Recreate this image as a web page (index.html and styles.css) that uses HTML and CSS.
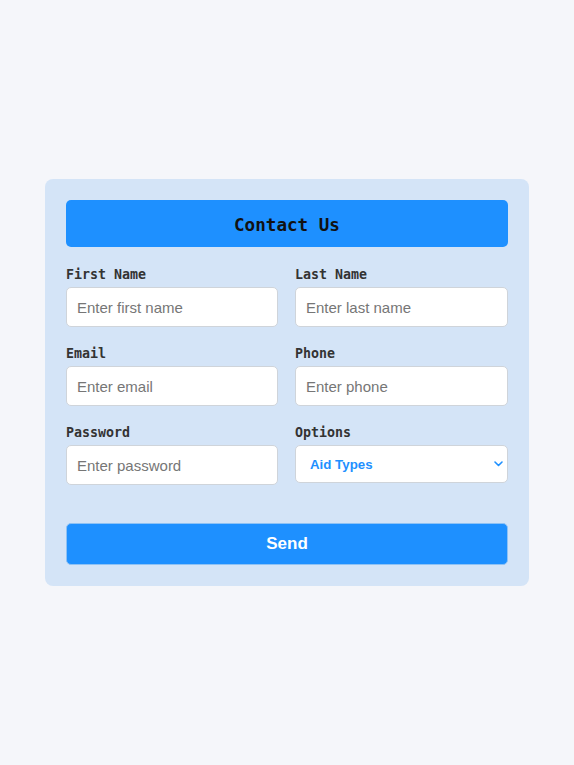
FILE: index.html
```html
<!DOCTYPE html>
<html>
<head>
<meta charset="utf-8">
<link rel="stylesheet" href="styles.css">
</head>
<body>
<div class="page">
  <form class="card">
    <div class="header">Contact Us</div>
    <div class="grid">
      <div class="group">
        <label class="label">First Name</label>
        <input class="field" type="text" placeholder="Enter first name">
      </div>
      <div class="group">
        <label class="label">Last Name</label>
        <input class="field" type="text" placeholder="Enter last name">
      </div>
      <div class="group">
        <label class="label">Email</label>
        <input class="field" type="text" placeholder="Enter email">
      </div>
      <div class="group">
        <label class="label">Phone</label>
        <input class="field" type="text" placeholder="Enter phone">
      </div>
      <div class="group">
        <label class="label">Password</label>
        <input class="field" type="password" placeholder="Enter password">
      </div>
      <div class="group">
        <label class="label">Options</label>
        <div class="select-wrap">
          <select class="select">
            <option>Aid Types</option>
          </select>
          <svg class="chevron" width="9" height="6" viewBox="0 0 9 6"><path d="M1 1 L4.5 4.5 L8 1" fill="none" stroke="#1e90ff" stroke-width="1.6" stroke-linecap="round" stroke-linejoin="round"/></svg>
        </div>
      </div>
    </div>
    <button class="send" type="button">Send</button>
  </form>
</div>
</body>
</html>
```
FILE: styles.css
```css
html, body {
  margin: 0;
  padding: 0;
  background: #f5f6fa;
}
.page {
  width: 574px;
  height: 765px;
  display: flex;
  align-items: center;
  justify-content: center;
}
.card {
  box-sizing: border-box;
  width: 484px;
  background: #d4e4f7;
  border-radius: 8px;
  padding: 21px 21px 21px;
  margin: 0;
}
.header {
  box-sizing: border-box;
  height: 47px;
  padding-top: 2px;
  background: #1e90ff;
  border-radius: 5px;
  display: flex;
  align-items: center;
  justify-content: center;
  font-family: "DejaVu Sans Mono", monospace;
  font-weight: bold;
  font-size: 17.6px;
  color: #111;
}
.grid {
  display: grid;
  grid-template-columns: 212px 1fr;
  column-gap: 17px;
  row-gap: 17px;
  margin-top: 18px;
}
.group {
  display: flex;
  flex-direction: column;
}
.label {
  font-family: "DejaVu Sans Mono", monospace;
  font-weight: bold;
  font-size: 13.3px;
  line-height: 20px;
  color: #333;
  margin-bottom: 2px;
}
.field {
  box-sizing: border-box;
  height: 40px;
  width: 100%;
  border: 1px solid #cfd4da;
  border-radius: 5px;
  background: #fff;
  padding: 0 10px;
  font-family: "Liberation Sans", Arial, sans-serif;
  font-size: 15px;
  color: #333;
  margin: 0;
}
.field::placeholder {
  color: #767676;
}
.select-wrap {
  position: relative;
}
.select {
  box-sizing: border-box;
  -webkit-appearance: none;
  appearance: none;
  width: 100%;
  height: 38px;
  border: 1px solid #cfd4da;
  border-radius: 5px;
  background: #fff;
  padding: 0 14px;
  font-family: "Liberation Sans", Arial, sans-serif;
  font-weight: bold;
  font-size: 13.3px;
  color: #1e90ff;
  margin: 0;
}
.chevron {
  position: absolute;
  right: 5px;
  top: 16px;
}
.send {
  display: block;
  box-sizing: border-box;
  width: 100%;
  height: 42px;
  margin-top: 38px;
  border: 1px solid #8ec2f5;
  border-radius: 5px;
  background: #1e90ff;
  color: #fff;
  font-family: "Liberation Sans", Arial, sans-serif;
  font-weight: bold;
  font-size: 17px;
}
```
